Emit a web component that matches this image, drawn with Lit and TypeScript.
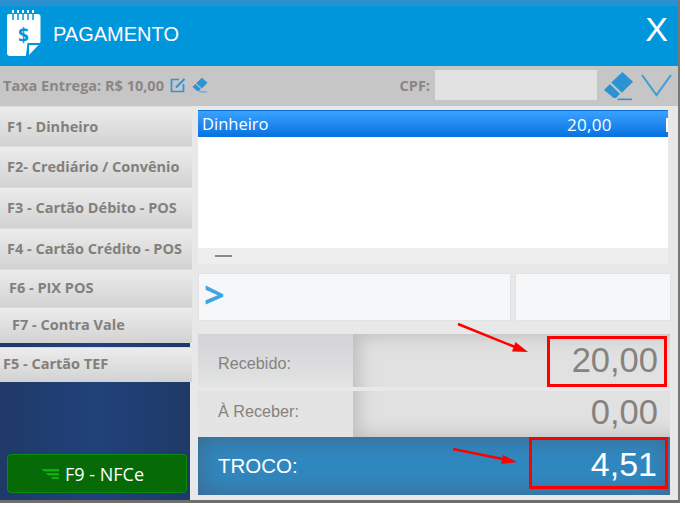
import { LitElement, html, css, svg } from "lit";
import { customElement } from "lit/decorators.js";

const eraser = (cls: string) => html`<svg class=${cls} viewBox="0 0 32 32" aria-hidden="true">
  <path fill="currentColor" d="M20 1.500 31 11.500 19.500 23 8.500 12.500Z"/>
  <path fill="currentColor" d="M7 14 17.500 24 13.500 28.500 11 28.500 1 20Z"/>
  <rect fill="currentColor" x="15" y="29" width="15" height="1.600"/>
</svg>`;

@customElement("app-root")
export class AppRoot extends LitElement {
  static styles = css`
    :host { display: block; width: 685px; height: 507px; background: #fff; overflow: hidden; font-family: "Open Sans", sans-serif; }
    .frame { position: relative; width: 678px; height: 500px; border-right: 2px solid #777; border-bottom: 3px solid #6e6e6e; display: flex; flex-direction: column; background: #e8e8e8; }
    .header { height: 66px; flex: none; box-sizing: border-box; border-top: 6px solid #2b90d2; background: #0096dc; display: flex; align-items: center; padding: 0 10px 0 6px; color: #fff; }
    .logo { width: 35px; height: 47px; flex: none; margin-top: -5px; }
    .title { font: 20px "Liberation Sans", sans-serif; margin-left: 12px; flex: 1; margin-top: -3px; }
    .close { font: 34px "Liberation Sans", sans-serif; line-height: 40px; margin-top: -15px; }
    .toolbar { height: 40px; flex: none; background: #c6c6c6; display: flex; align-items: center; padding: 0 6px 0 3px; color: #8a8684; font-weight: 700; font-size: 14.500px; box-sizing: border-box; }
    .fee { white-space: nowrap; margin-top: -2px; }
    .edit { width: 16px; height: 16px; margin-left: 6px; color: #2f94d6; flex: none; margin-top: -2px; }
    .eraser-small { width: 16px; height: 16px; margin-left: 6px; color: #2c93d4; flex: none; margin-top: -2px; }
    .cpf { margin-left: auto; margin-top: -2px; }
    .cpf-input { width: 162px; height: 30px; background: #e2e2e2; margin-left: 5px; flex: none; margin-top: -3px; }
    .eraser-big { width: 31px; height: 32px; margin-left: 6px; color: #2b93d4; flex: none; }
    .check { width: 31px; height: 24px; margin-left: 7px; color: #3f9bd8; flex: none; margin-top: -2px; }
    .body { flex: 1; display: flex; min-height: 0; }
    .side { width: 192px; flex: none; display: flex; flex-direction: column; background: linear-gradient(90deg, #1f3a68 0, #20417a 50%, #1f3a68 100%); background-size: 190px 100%; background-repeat: no-repeat; }
    .side-btn { display: flex; align-items: center; box-sizing: border-box; padding-left: 7px; padding-bottom: 2px; background: linear-gradient(#ececec, #d2d2d2); color: #827f7d; font-size: 14.500px; font-weight: 700; white-space: nowrap; border-top: 1px solid #dcdcdc; }
    .h40 { height: 40px; padding-bottom: 0; } .h41 { height: 41px; } .h38 { height: 38px; padding-bottom: 3px; } .h36 { height: 36px; padding-bottom: 3px; } .h35 { height: 35px; padding-bottom: 3px; }
    .p9 { padding-left: 9px; } .p12 { padding-left: 12px; } .p3 { padding-left: 3px; }
    .dark-gap { height: 4px; flex: none; }
    .spacer { flex: 1; }
    .nfce { height: 39px; margin: 0 5px 7px 7px; box-sizing: border-box; background: #066a06; border: 1px solid #0a8a0a; border-radius: 4px; color: #fff; display: flex; align-items: center; padding-left: 33px; gap: 6px; font-size: 18px; font-weight: 500; flex: none; }
    .nfce svg { width: 18px; height: 10px; }
    .main { flex: 1; padding: 4px 8px 5px 6px; display: flex; flex-direction: column; min-width: 0; }
    .list { width: 470px; height: 154px; background: #fff; display: flex; flex-direction: column; flex: none; }
    .row { height: 27px; box-sizing: border-box; background: linear-gradient(#3aa2ff, #0672e0); border-top: 1px solid #0a6fd0; color: #fff; font-size: 16.500px; display: flex; align-items: center; padding-left: 4px; position: relative; line-height: 1; }
    .row .val { position: absolute; left: 369px; font-size: 17px; letter-spacing: 0.3px; }
    .row .tick { position: absolute; right: 0; top: 7px; width: 2px; height: 14px; background: #fff; }
    .fill { flex: 1; }
    .scroll { height: 16px; background: #eee; display: flex; align-items: center; padding-left: 17px; }
    .scroll i { display: block; width: 17px; height: 2px; background: #8a8a8a; }
    .inputs { display: flex; gap: 4px; margin-top: 9px; width: 473px; height: 48px; flex: none; }
    .box { box-sizing: border-box; background: #f5f7f9; border: 1px solid #e2e2e2; height: 48px; }
    .box.a { width: 313px; color: #3ea6e2; font: 700 36px "Open Sans", sans-serif; line-height: 42px; padding-left: 5px; }
    .box.b { flex: 1; }
    .summary { margin-top: 13px; width: 472px; flex: none; display: flex; flex-direction: column; }
    .srow { display: flex; color: #85827f; }
    .s1 { height: 53px; }
    .s2 { height: 46px; margin-top: 4px; }
    .lab { width: 155px; flex: none; box-sizing: border-box; padding-left: 20px; font: 16.200px "Liberation Sans", sans-serif; display: flex; align-items: center; }
    .s1 .lab { background: linear-gradient(#d3d3d8, #e2e3e2); padding-top: 6px; }
    .s2 .lab { background: linear-gradient(#e2e3e2, #e3e4e3); padding-bottom: 6px; }
    .val-cell { flex: 1; display: flex; align-items: center; justify-content: flex-end; padding-right: 12px; font: 34.500px "Liberation Sans", sans-serif; background: #e0e1e0; }
    .s1 .val-cell { box-shadow: inset 14px 10px 18px -8px #bdbdbd; }
    .s2 .val-cell { box-shadow: inset 14px -10px 18px -8px #bebebe; padding-bottom: 4px; }
    .s3 { height: 58px; background: #3088c0; box-shadow: inset 0 0 24px 2px #3d6a8e; color: #fff; display: flex; align-items: center; justify-content: space-between; padding: 0 13px 0 20px; font-family: "Liberation Sans", sans-serif; flex: none; }
    .s3 .lab2 { font-size: 20.500px; margin-top: -1px; }
    .s3 .num { font-size: 34px; margin-top: -3px; }
    .mark { position: absolute; box-sizing: border-box; border: 3px solid #f00; }
    .m1 { left: 547px; top: 336px; width: 120px; height: 51px; }
    .m2 { left: 529px; top: 437px; width: 139px; height: 52px; }
    .arrows { position: absolute; left: 0; top: 0; width: 678px; height: 500px; pointer-events: none; }
  `;

  private side(label: string, cls: string) {
    return html`<div class="side-btn ${cls}">${label}</div>`;
  }

  render() {
    return html`<div class="frame">
      <div class="header">
        <svg class="logo" viewBox="0 0 35 47" aria-hidden="true">
          <path fill="#fff" d="M3 4h29a2.500 2.500 0 0 1 2.500 2.500V32L21 46H4a3 3 0 0 1-3-3V6a2 2 0 0 1 2-2Z"/>
          <g stroke="#0096dc" stroke-width="1.500"><path d="M7 3v7M12 3v7M17 3v7M22 3v7M27 3v7"/></g>
          <g stroke="#fff" stroke-width="2"><path d="M7 0v3M12 0v3M17 0v3M22 0v3M27 0v3"/></g>
          <path fill="#0096dc" d="M21.500 33H35L22 46.500H19.800Z"/>
          <path fill="#fff" d="M23 35h9.500L23 45Z"/>
          <text x="17.500" y="32" text-anchor="middle" fill="#0096dc" style="font:700 19px 'Open Sans',sans-serif">$</text>
        </svg>
        <div class="title">PAGAMENTO</div>
        <div class="close">X</div>
      </div>
      <div class="toolbar">
        <span class="fee">Taxa Entrega: R$ 10,00</span>
        <svg class="edit" viewBox="0 0 16 16" aria-hidden="true">
          <path fill="none" stroke="currentColor" stroke-width="1.700" d="M9 2.500H1.500v12h12V7"/>
          <path fill="none" stroke="currentColor" stroke-width="2" d="M6 10.500 14.500 2"/>
        </svg>
        ${eraser("eraser-small")}
        <span class="cpf">CPF:</span>
        <div class="cpf-input"></div>
        ${eraser("eraser-big")}
        <svg class="check" viewBox="0 0 31 24" aria-hidden="true">
          <path fill="none" stroke="currentColor" stroke-width="2" d="M1 2 15.500 22 30 2"/>
        </svg>
      </div>
      <div class="body">
        <div class="side">
          ${this.side("F1 - Dinheiro", "h40")}
          ${this.side("F2- Crediário / Convênio", "h41")}
          ${this.side("F3 - Cartão Débito - POS", "h41")}
          ${this.side("F4 - Cartão Crédito - POS", "h41")}
          ${this.side("F6 - PIX POS", "h38 p9")}
          ${this.side("F7 - Contra Vale", "h36 p12")}
          <div class="dark-gap"></div>
          ${this.side("F5 - Cartão TEF", "h35 p3")}
          <div class="spacer"></div>
          <div class="nfce">
            <svg viewBox="0 0 18 10" aria-hidden="true">
              <path fill="#0db00d" d="M0 0h18v2.500H3ZM5 4h13v2.500H7ZM10 8h8v2h-7Z"/>
            </svg>
            <span>F9 - NFCe</span>
          </div>
        </div>
        <div class="main">
          <div class="list">
            <div class="row"><span>Dinheiro</span><span class="val">20,00</span><span class="tick"></span></div>
            <div class="fill"></div>
            <div class="scroll"><i></i></div>
          </div>
          <div class="inputs">
            <div class="box a">&gt;</div>
            <div class="box b"></div>
          </div>
          <div class="summary">
            <div class="srow s1"><div class="lab">Recebido:</div><div class="val-cell">20,00</div></div>
            <div class="srow s2"><div class="lab">À Receber:</div><div class="val-cell">0,00</div></div>
            <div class="s3"><span class="lab2">TROCO:</span><span class="num">4,51</span></div>
          </div>
        </div>
      </div>
      <div class="mark m1"></div>
      <div class="mark m2"></div>
      <svg class="arrows" viewBox="0 0 678 500" aria-hidden="true">
        ${svg`<path stroke="#f00" stroke-width="2.500" d="M458 324 515 347"/>
        <path fill="#f00" d="M528 352 512 351.500 515.500 342Z"/>
        <path stroke="#f00" stroke-width="2.500" d="M453 449 505 459.500"/>
        <path fill="#f00" d="M517 462 501 464 503 455Z"/>`}
      </svg>
    </div>`;
  }
}
